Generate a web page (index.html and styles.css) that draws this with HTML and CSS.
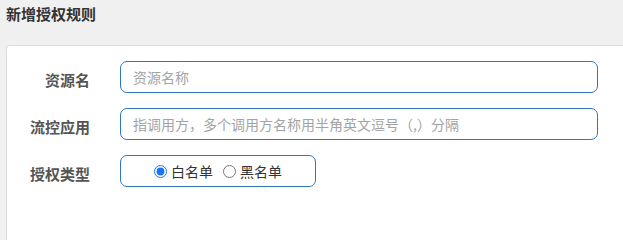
FILE: index.html
```html
<!DOCTYPE html>
<html lang="zh">
<head>
<meta charset="utf-8">
<title>新增授权规则</title>
<link rel="stylesheet" href="styles.css">
</head>
<body>
<div class="header">新增授权规则</div>
<div class="card">
  <div class="row">
    <label class="label">资源名</label>
    <input class="input" type="text" placeholder="资源名称">
  </div>
  <div class="row">
    <label class="label">流控应用</label>
    <input class="input" type="text" placeholder="指调用方，多个调用方名称用半角英文逗号（,）分隔">
  </div>
  <div class="row">
    <label class="label">授权类型</label>
    <div class="radio-box">
      <label class="radio"><input type="radio" name="t" checked><span>白名单</span></label>
      <label class="radio"><input type="radio" name="t"><span>黑名单</span></label>
    </div>
  </div>
</div>
</body>
</html>
```
FILE: styles.css
```css
html, body {
  margin: 0;
  padding: 0;
  background: #f0f0f0;
  font-family: "Noto Sans CJK SC", "Noto Sans", sans-serif;
  overflow: hidden;
}
body {
  height: 100vh;
  display: flex;
  flex-direction: column;
}
.header {
  flex: none;
  height: 45px;
  line-height: 28px;
  padding-left: 6px;
  font-size: 15px;
  font-weight: bold;
  color: #333;
  box-sizing: border-box;
}
.card {
  flex: 1;
  margin-left: 6px;
  background: #fff;
  border: 1px solid #dcdcdc;
  border-right: 0;
  border-bottom: 0;
  border-radius: 4px 0 0 0;
  padding: 15px 0 0 0;
  display: flex;
  flex-direction: column;
  gap: 15px;
}
.row {
  display: grid;
  grid-template-columns: 83px auto;
  column-gap: 30px;
  align-items: center;
  height: 32px;
}
.label {
  text-align: right;
  font-size: 15px;
  font-weight: bold;
  color: #555;
  margin-top: 5px;
}
.input {
  width: 478px;
  height: 32px;
  box-sizing: border-box;
  border: 1px solid #2f77bb;
  border-radius: 7px;
  padding: 0 12px;
  font-family: inherit;
  font-size: 14px;
  color: #333;
  outline: none;
  background: #fff;
}
.input::placeholder {
  color: #a3a3a3;
}
.radio-box {
  width: 196px;
  height: 32px;
  box-sizing: border-box;
  border: 1px solid #2f77bb;
  border-radius: 7px;
  display: flex;
  justify-content: center;
  align-items: center;
  gap: 10px;
}
.radio {
  display: flex;
  align-items: center;
  gap: 4px;
  font-size: 14px;
  color: #333;
}
.radio input {
  margin: 0;
  width: 13px;
  height: 13px;
  accent-color: #1a73f5;
}
```
